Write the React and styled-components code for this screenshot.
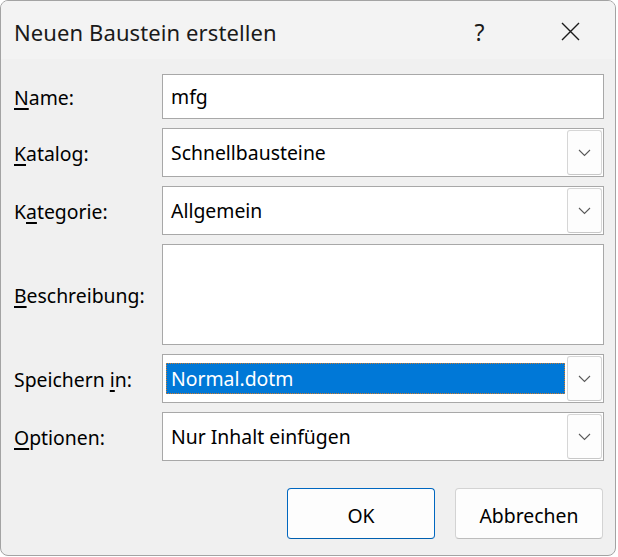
import React from 'react';
import styled, { createGlobalStyle } from 'styled-components';

const GlobalStyle = createGlobalStyle`
  html, body {
    margin: 0;
    padding: 0;
    background: #ffffff;
  }
  body {
    font-family: "Noto Sans", "Open Sans", sans-serif;
  }
`;

const Window = styled.div`
  box-sizing: border-box;
  width: 616px;
  height: 556px;
  border: 1px solid #a3a3a3;
  border-radius: 8px;
  background: #f0f0f0;
  display: flex;
  flex-direction: column;
  overflow: hidden;
  color: #000;
`;

const TitleBar = styled.div`
  height: 58px;
  flex: none;
  display: flex;
  align-items: center;
  background: #f3f3f3;
  padding-left: 13px;
`;

const Title = styled.div`
  flex: 1;
  font-size: 22px;
  letter-spacing: 0.1px;
  color: #1a1a1a;
  padding-top: 4px;
`;

const TitleButton = styled.div`
  width: ${(p) => p.$w}px;
  height: 58px;
  display: flex;
  align-items: center;
  justify-content: center;
  font-size: 23px;
  color: #1a1a1a;
  padding-top: 3px;
  box-sizing: border-box;
`;

const Body = styled.div`
  flex: 1;
  padding: 15px 11px 0 13px;
  display: flex;
  flex-direction: column;
`;

const Form = styled.div`
  display: grid;
  grid-template-columns: 148px 1fr;
  row-gap: 9px;
  align-items: center;
`;

const Label = styled.label`
  font-size: 19.4px;
  color: #000;
  padding-top: 1px;
  u {
    text-decoration-thickness: 1.5px;
    text-underline-offset: 3px;
  }
`;

const Field = styled.div`
  box-sizing: border-box;
  height: ${(p) => p.$h}px;
  background: #ffffff;
  border: 1px solid #a8a8a8;
  display: flex;
  align-items: center;
  font-size: 19.4px;
`;

const Value = styled.span`
  flex: 1;
  padding-left: 8px;
  padding-bottom: 1px;
`;

const Selected = styled.span`
  flex: 1;
  align-self: stretch;
  margin: 8px 2px 8px 3px;
  background: #0078d7;
  color: #ffffff;
  outline: 1px dotted #d07a2a;
  outline-offset: -1px;
  padding-left: 5px;
  display: flex;
  align-items: center;
  padding-bottom: 1px;
`;

const DropButton = styled.div`
  box-sizing: border-box;
  width: 35px;
  align-self: stretch;
  margin: 1px 1px 1px 0;
  background: #fdfdfd;
  border: 1px solid #d6d6d6;
  border-bottom-color: #c8c8c8;
  border-radius: 3px;
  display: flex;
  align-items: center;
  justify-content: center;
`;

const Footer = styled.div`
  display: flex;
  justify-content: flex-end;
  gap: 20px;
  padding-top: 27px;
  padding-right: 1px;
`;

const Button = styled.button`
  box-sizing: border-box;
  width: 148px;
  height: 51px;
  background: #fdfdfd;
  border: 1px solid ${(p) => (p.$primary ? '#0067c0' : '#d3d3d3')};
  border-bottom-color: ${(p) => (p.$primary ? '#0060b0' : '#bdbdbd')};
  border-radius: 4px;
  font-family: inherit;
  font-size: 19.4px;
  color: #000;
  padding: 3px 0 0;
`;

const Chevron = () => (
  <svg width="13" height="8" viewBox="0 0 13 8">
    <path d="M1 1 L6.5 6.5 L12 1" fill="none" stroke="#5a5a5a" strokeWidth="1.1" />
  </svg>
);

const Combo = ({ children, selected }) => (
  <Field $h={49}>
    {selected ? <Selected>{children}</Selected> : <Value>{children}</Value>}
    <DropButton>
      <Chevron />
    </DropButton>
  </Field>
);

export default function App() {
  return (
    <>
      <GlobalStyle />
      <Window>
        <TitleBar>
          <Title>Neuen Baustein erstellen</Title>
          <TitleButton $w={91}>?</TitleButton>
          <TitleButton $w={90}>
            <svg width="19" height="19" viewBox="0 0 19 19">
              <path d="M1 1 L18 18 M18 1 L1 18" stroke="#1a1a1a" strokeWidth="1.4" />
            </svg>
          </TitleButton>
        </TitleBar>
        <Body>
          <Form>
            <Label><u>N</u>ame:</Label>
            <Field $h={45}>
              <Value>mfg</Value>
            </Field>

            <Label><u>K</u>atalog:</Label>
            <Combo>Schnellbausteine</Combo>

            <Label>K<u>a</u>tegorie:</Label>
            <Combo>Allgemein</Combo>

            <Label><u>B</u>eschreibung:</Label>
            <Field $h={101} />

            <Label>Speichern <u>i</u>n:</Label>
            <Combo selected>Normal.dotm</Combo>

            <Label><u>O</u>ptionen:</Label>
            <Combo>Nur Inhalt einfügen</Combo>
          </Form>
          <Footer>
            <Button $primary>OK</Button>
            <Button>Abbrechen</Button>
          </Footer>
        </Body>
      </Window>
    </>
  );
}
